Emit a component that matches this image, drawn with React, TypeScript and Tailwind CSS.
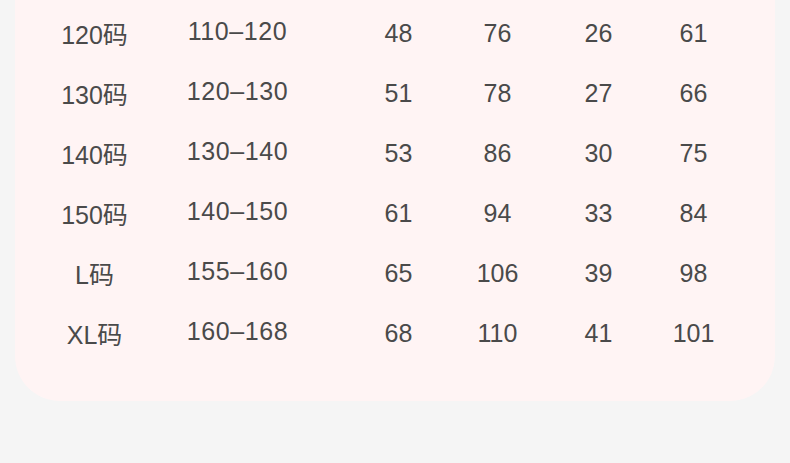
const rows = [
  ["120码", "110–120", "48", "76", "26", "61"],
  ["130码", "120–130", "51", "78", "27", "66"],
  ["140码", "130–140", "53", "86", "30", "75"],
  ["150码", "140–150", "61", "94", "33", "84"],
  ["L码", "155–160", "65", "106", "39", "98"],
  ["XL码", "160–168", "68", "110", "41", "101"],
];

const cols = [
  "w-[92px] mt-[2px]",
  "w-[120px] ml-[37px] -mt-[2px] tracking-[0.6px]",
  "w-[92px] ml-[55px]",
  "w-[92px] ml-[7px]",
  "w-[92px] ml-[9px]",
  "w-[92px] ml-[3px]",
];

export default function App() {
  return (
    <div
      className="min-h-[463px] w-full bg-[#f5f5f5] px-[15px]"
      style={{ fontFamily: '"Liberation Sans", "Noto Sans CJK SC", sans-serif' }}
    >
      <div className="rounded-b-[45px] bg-[#fff4f4] pl-[33.5px] pt-[3px] pb-[38px] text-[25px] text-[#4a4a4a]">
        {rows.map((row) => (
          <div key={row[0]} className="flex h-[60px] items-start">
            {row.map((cell, i) => (
              <div key={i} className={`${cols[i]} shrink-0 whitespace-nowrap text-center leading-[60px]`}>
                {cell}
              </div>
            ))}
          </div>
        ))}
      </div>
    </div>
  );
}
